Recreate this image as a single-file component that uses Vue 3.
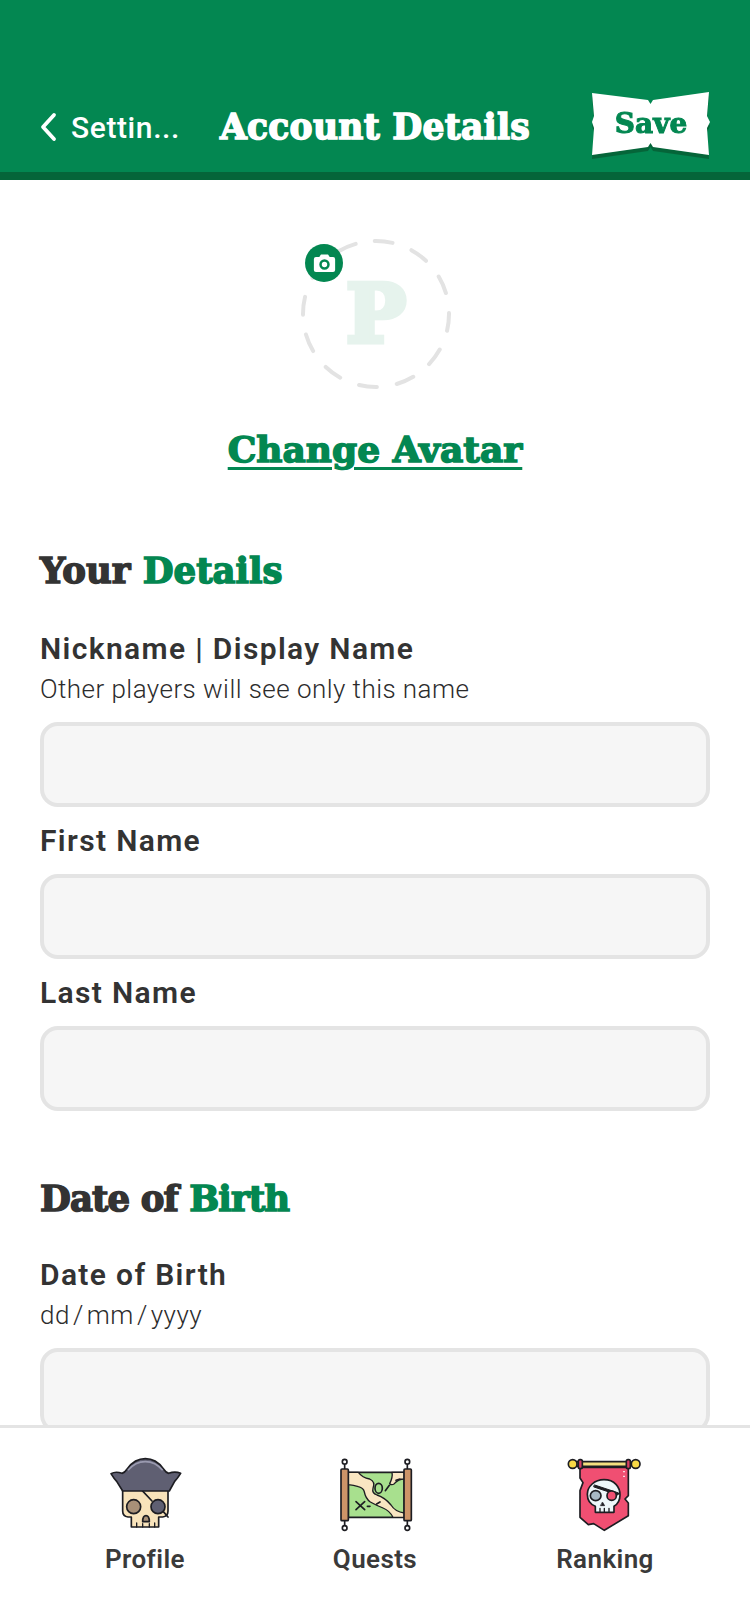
<script setup>
const sections = [
  {
    dark: 'Your', green: 'Details', fields: [
      { label: 'Nickname | Display Name', hint: 'Other players will see only this name' },
      { label: 'First Name' },
      { label: 'Last Name' },
    ],
  },
  {
    dark: 'Date of', green: 'Birth', fields: [
      { label: 'Date of Birth', hint: 'dd\u200a/\u200amm\u200a/\u200ayyyy' },
    ],
  },
]
</script>

<template>
  <div class="page">
    <header class="header">
      <a class="back">
        <svg class="chevron" viewBox="0 0 18 30" width="18" height="30">
          <path d="M15 3 L4 15 L15 27" fill="none" stroke="#fff" stroke-width="3.8" stroke-linecap="round" stroke-linejoin="round" />
        </svg>
        <span>Settin...</span>
      </a>
      <h1 class="title">Account Details</h1>
      <div class="save-wrap"><button class="save">Save</button></div>
    </header>

    <main class="main">
      <div class="avatar-block">
        <div class="avatar">
          <svg class="ring" viewBox="0 0 150 150" width="150" height="150">
            <circle cx="75" cy="75" r="73" fill="none" stroke="#e3e3e3" stroke-width="4" stroke-dasharray="18 20.23" stroke-linecap="round" transform="rotate(-91 75 75)" />
          </svg>
          <span class="initial">P</span>
          <span class="badge">
            <svg viewBox="0 0 24 24" width="25" height="25">
              <path fill="#fff" fill-rule="evenodd" d="M8.6 3.4h6.8l1.6 2.4h3.2a2 2 0 0 1 2 2v10.4a2 2 0 0 1-2 2H3.8a2 2 0 0 1-2-2V7.8a2 2 0 0 1 2-2H7zM12 8a5 5 0 1 0 0 10 5 5 0 0 0 0-10zm0 2.4a2.6 2.6 0 1 1 0 5.2 2.6 2.6 0 0 1 0-5.2z" />
            </svg>
          </span>
        </div>
        <a class="change">Change Avatar</a>
      </div>

      <section v-for="s in sections" :key="s.green" class="section">
        <h2 class="heading">{{ s.dark }} <span class="green">{{ s.green }}</span></h2>
        <div v-for="f in s.fields" :key="f.label" class="field">
          <label class="label">{{ f.label }}</label>
          <p v-if="f.hint" class="hint">{{ f.hint }}</p>
          <input class="input" type="text" />
        </div>
      </section>
    </main>

    <nav class="nav">
      <a class="tab">
        <svg viewBox="0 0 270 270" width="90" height="90">
          <g stroke="#1d1d22" stroke-width="5" stroke-linejoin="round" stroke-linecap="round">
            <path fill="#f8e3bb" d="M68 122h136v64q0 16-16 18h-12v30H94v-30H84q-16-2-16-18z" />
            <circle cx="101" cy="173" r="21" fill="#a89078" />
            <circle cx="174" cy="173" r="21" fill="#5f5f72" />
            <path fill="none" d="M126 124 156 156M190 188 204 204" />
            <path fill="#a89078" d="M128 218q0-18 10-18t10 18z" />
            <path fill="none" d="M110 222v12M128 224v10M148 224v10M164 222v12" stroke-width="4" />
            <path fill="#5f5f72" d="M33 74q14-8 33-1 8-2 16-14 22-30 54-30t54 30q8 12 16 14 19-7 36 0-10 16-18 24l-16 29H68L50 97q-8-8-17-23z" />
          </g>
          <path d="M84 64q22-26 52-26t52 26" fill="none" stroke="#9a9ab0" stroke-width="5" />
        </svg>
        <span>Profile</span>
      </a>
      <a class="tab">
        <svg viewBox="0 0 270 270" width="90" height="90">
          <g stroke="#1d1d22" stroke-width="5" stroke-linejoin="round" stroke-linecap="round">
            <path d="M44 46v14M44 216v14M232 46v14M232 216v14" fill="none" />
            <circle cx="44" cy="38" r="7" fill="#fff" />
            <circle cx="44" cy="237" r="7" fill="#fff" />
            <circle cx="232" cy="38" r="7" fill="#fff" />
            <circle cx="232" cy="237" r="7" fill="#fff" />
            <rect x="55" y="70" width="168" height="135" fill="#a8e08e" />
            <path fill="#f9e6c2" stroke-width="4" d="M55 70h30q12 16 34 20 18 8 10 28-4 14 12 20 24 8 42 30 12 20 40 24v13h-34q-10-20-30-28-20-8-38-18-14-10-18-30-2-12-18-16-14-4-30-6z" />
            <path fill="#f9e6c2" stroke-width="4" d="M186 70h37v20q-18 0-30 14-8 6-14 0 10-20 7-34z" />
            <ellipse cx="146" cy="118" rx="11" ry="15" fill="#a8e08e" stroke-width="5" />
            <path fill="none" d="M78 158 104 182M104 158 78 182M112 172h8M140 165l10-6M166 125l12-16M198 94l12-4" />
            <rect x="33" y="60" width="22" height="155" rx="3" fill="#cd9468" />
            <rect x="222" y="60" width="22" height="155" rx="3" fill="#cd9468" />
          </g>
        </svg>
        <span>Quests</span>
      </a>
      <a class="tab">
        <svg viewBox="0 0 270 270" width="90" height="90">
          <g stroke="#1d1d22" stroke-width="5" stroke-linejoin="round" stroke-linecap="round">
            <path fill="#f04f72" d="M60 55h145v85l-10 10 10 12v38l-72 44-32-20-16 3-25-22v-80l9-24-9-14z" />
            <rect x="50" y="38" width="162" height="14" fill="#f5e07f" />
            <circle cx="38" cy="45" r="13" fill="#f8d946" />
            <circle cx="227" cy="45" r="13" fill="#f8d946" />
            <rect x="55" y="32" width="12" height="27" rx="5" fill="#d63f64" />
            <rect x="199" y="32" width="12" height="27" rx="5" fill="#d63f64" />
            <path fill="#eef7fa" d="M132 92c32 0 48 22 48 46 0 16-8 28-18 34v18h-56v-18c-16-6-24-20-24-36 0-24 22-44 50-44z" />
            <ellipse cx="107" cy="140" rx="16" ry="15" fill="#a7b8c4" />
            <path fill="#1d1d22" stroke-width="3" d="M104 108l72 24-2 6-72-24z" />
            <circle cx="155" cy="140" r="14" fill="#f04f72" />
            <path fill="#1d1d22" stroke-width="2" d="M128 160l6 10h-12z" />
            <path fill="none" stroke-width="4" d="M120 178v10M133 178v10M147 178v10" />
          </g>
          <path d="M192 66v4M192 80v4" stroke="#fbd6df" stroke-width="6" />
        </svg>
        <span>Ranking</span>
      </a>
    </nav>
  </div>
</template>

<style>
html, body { margin: 0; background: #fff; }
</style>

<style scoped>
.page {
  width: 750px;
  height: 1624px;
  display: flex;
  flex-direction: column;
  overflow: hidden;
  background: #fff;
  font-family: Roboto, "Noto Sans", sans-serif;
  color: #333;
}
.header {
  flex: none;
  height: 172px;
  box-sizing: content-box;
  background: #038751;
  border-bottom: 8px solid #056539;
  padding: 0 40px;
  display: grid;
  grid-template-columns: 1fr auto 1fr;
  align-items: end;
  color: #fff;
}
.back {
  display: flex;
  align-items: center;
  gap: 14px;
  height: 60px;
  margin-bottom: 15px;
  font-size: 30px;
  font-weight: 500;
  letter-spacing: 0.6px;
  white-space: nowrap;
}
.chevron { margin-left: -1px; }
.title, .heading, .change, .save, .initial {
  font-family: "DejaVu Serif", "Liberation Serif", serif;
  font-weight: 700;
}
.title {
  margin: 0 0 15px;
  height: 60px;
  line-height: 60px;
  font-size: 34.5px;
  letter-spacing: 0.3px;
  -webkit-text-stroke: 1.5px #fff;
  white-space: nowrap;
}
.save-wrap {
  justify-self: end;
  margin-bottom: 17px;
  filter: drop-shadow(0 4px 0 #056539);
}
.save {
  display: block;
  width: 118px;
  height: 63px;
  border: 0;
  padding: 0;
  background: #fff;
  color: #038751;
  font-size: 28px;
  -webkit-text-stroke: 1px #038751;
  clip-path: polygon(0 1px, 56px 8px, 58.5px 12px, 61px 8px, 117px 0, 115px 24px, 118px 30px, 115px 36px, 117px 63px, 61px 55px, 58.5px 51px, 56px 55px, 0 63px, 2px 36px, 0 30px, 2px 24px);
}
.main {
  flex: 1;
  min-height: 0;
  overflow: hidden;
  padding: 59px 40px 0;
}
.avatar-block {
  display: flex;
  flex-direction: column;
  align-items: center;
  padding-bottom: 11px;
}
.avatar {
  position: relative;
  width: 150px;
  height: 150px;
  margin-left: 2px;
  display: flex;
  align-items: center;
  justify-content: center;
}
.ring { position: absolute; inset: 0; }
.initial {
  font-size: 80px;
  line-height: 1;
  color: #e6f3ed;
  -webkit-text-stroke: 5px #e6f3ed;
}
.badge {
  position: absolute;
  left: 4px;
  top: 5px;
  width: 38px;
  height: 38px;
  border-radius: 50%;
  background: #038751;
  display: flex;
  align-items: center;
  justify-content: center;
}
.change {
  margin-top: 37px;
  font-size: 36px;
  line-height: 46px;
  color: #038751;
  text-decoration: underline;
  text-decoration-thickness: 3px;
  text-underline-offset: 5px;
  -webkit-text-stroke: 1.5px #038751;
  white-space: nowrap;
}
.section { margin-top: 65px; }
.heading {
  margin: 0 0 35px;
  font-size: 35.5px;
  line-height: 46px;
  color: #333;
  -webkit-text-stroke: 1.5px currentColor;
}
.section + .section .heading {
  margin-bottom: 33px;
  letter-spacing: -0.9px;
}
.green { color: #038751; }
.field + .field { margin-top: 14px; }
.label {
  display: block;
  font-size: 30px;
  font-weight: 600;
  line-height: 40px;
  letter-spacing: 1.35px;
}
.hint {
  margin: 0;
  font-size: 26px;
  font-weight: 300;
  line-height: 36px;
  padding: 2px 0;
  letter-spacing: 0.45px;
  color: #2c2c2c;
}
.input {
  display: block;
  width: 100%;
  height: 85px;
  margin-top: 13px;
  box-sizing: border-box;
  border: 4px solid #e4e4e4;
  border-radius: 18px;
  background: #f6f6f6;
  outline: none;
}
.nav {
  flex: none;
  height: 199px;
  box-sizing: border-box;
  border-top: 3px solid #e4e4e4;
  background: #fff;
  padding: 21px 30px 0;
  display: grid;
  grid-template-columns: repeat(3, 1fr);
}
.tab {
  display: flex;
  flex-direction: column;
  align-items: center;
  font-size: 26px;
  font-weight: 600;
  letter-spacing: 0.4px;
  color: #3a3a3a;
}
.tab span { margin-top: 1px; line-height: 38px; }
</style>
